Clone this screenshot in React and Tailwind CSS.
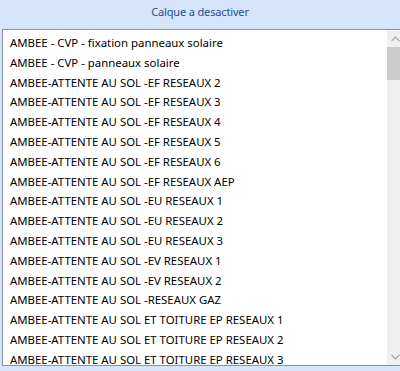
import React from 'react';

const items = [
  'AMBEE - CVP - fixation panneaux solaire',
  'AMBEE - CVP - panneaux solaire',
  'AMBEE-ATTENTE AU SOL -EF RESEAUX 2',
  'AMBEE-ATTENTE AU SOL -EF RESEAUX 3',
  'AMBEE-ATTENTE AU SOL -EF RESEAUX 4',
  'AMBEE-ATTENTE AU SOL -EF RESEAUX 5',
  'AMBEE-ATTENTE AU SOL -EF RESEAUX 6',
  'AMBEE-ATTENTE AU SOL -EF RESEAUX AEP',
  'AMBEE-ATTENTE AU SOL -EU RESEAUX 1',
  'AMBEE-ATTENTE AU SOL -EU RESEAUX 2',
  'AMBEE-ATTENTE AU SOL -EU RESEAUX 3',
  'AMBEE-ATTENTE AU SOL -EV RESEAUX 1',
  'AMBEE-ATTENTE AU SOL -EV RESEAUX 2',
  'AMBEE-ATTENTE AU SOL -RESEAUX GAZ',
  'AMBEE-ATTENTE AU SOL ET TOITURE EP RESEAUX 1',
  'AMBEE-ATTENTE AU SOL ET TOITURE EP RESEAUX 2',
  'AMBEE-ATTENTE AU SOL ET TOITURE EP RESEAUX 3',
];

const Chevron = ({ down }) => (
  <svg width="9" height="6" viewBox="0 0 9 6" className="block">
    <path
      d={down ? 'M0.5 0.8 L4.5 4.8 L8.5 0.8' : 'M0.5 5.2 L4.5 1.2 L8.5 5.2'}
      fill="none"
      stroke="#a3a3a3"
      strokeWidth="1.2"
    />
  </svg>
);

const App = () => {
  return (
    <div
      className="w-[400px] h-[371px] overflow-hidden bg-[#d6e5fa]"
      style={{ fontFamily: '"Noto Sans", "Open Sans", sans-serif' }}
    >
      {/* Titre */}
      <div className="h-[29px] pb-[4px] flex items-center justify-center text-[11px] tracking-[-0.15px] text-[#23508f]">
        Calque a desactiver
      </div>

      {/* Liste */}
      <div className="ml-[2px] w-[403px] h-[337px] bg-white border border-[#8593ad] flex">
        <div className="flex-1 overflow-hidden pt-[3px]">
          {items.map((item) => (
            <div key={item} className="h-[19.8px] leading-[19.8px] pl-[7px] text-[11.4px] text-black whitespace-nowrap">
              {item}
            </div>
          ))}
        </div>
        <div className="w-[17px] bg-[#f0f0f0] flex flex-col">
          <div className="h-[17px] flex items-center justify-center">
            <Chevron />
          </div>
          <div className="h-[33px] bg-[#cdcdcd]" />
          <div className="flex-1" />
          <div className="h-[17px] flex items-center justify-center">
            <Chevron down />
          </div>
        </div>
      </div>
    </div>
  );
};

export default App;
